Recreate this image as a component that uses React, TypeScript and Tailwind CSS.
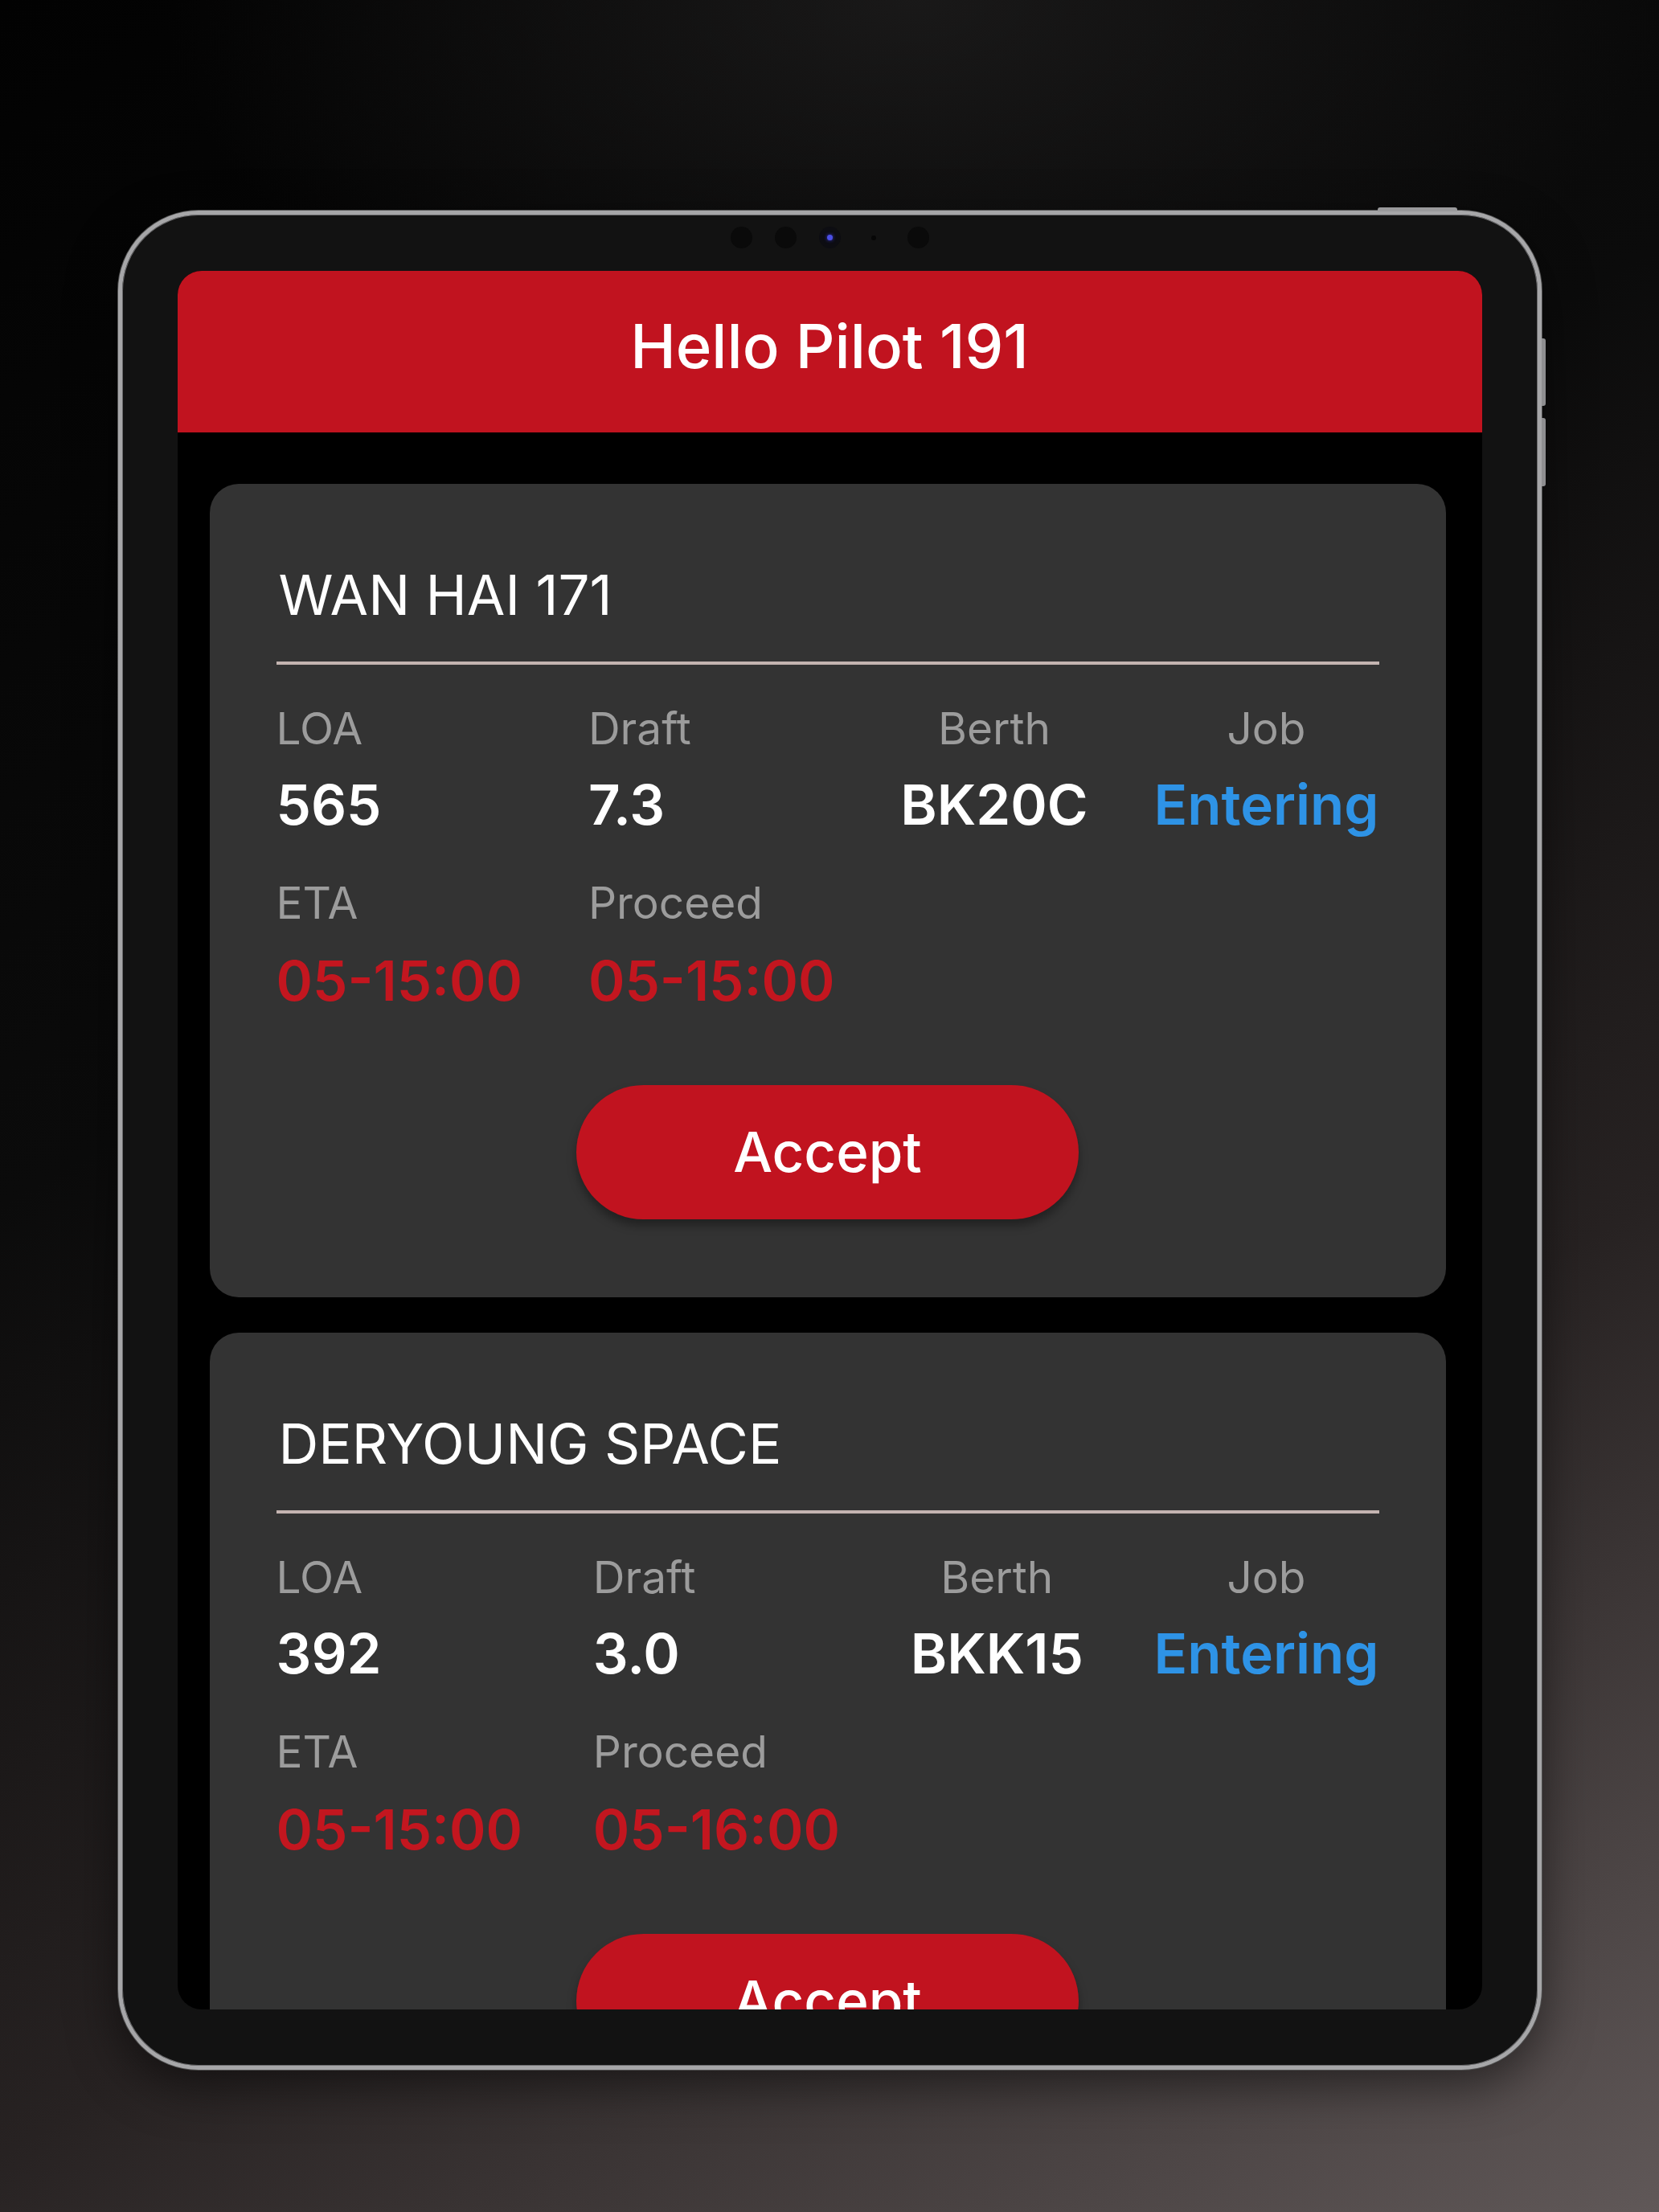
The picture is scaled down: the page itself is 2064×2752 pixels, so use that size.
import React from "react";

type Job = {
  name: string;
  loa: string;
  draft: string;
  berth: string;
  job: string;
  eta: string;
  proceed: string;
};

const jobs: Job[] = [
  { name: "WAN HAI 171", loa: "565", draft: "7.3", berth: "BK20C", job: "Entering", eta: "05-15:00", proceed: "05-15:00" },
  { name: "DERYOUNG SPACE", loa: "392", draft: "3.0", berth: "BKK15", job: "Entering", eta: "05-15:00", proceed: "05-16:00" },
];

function Label({ children, className = "" }: { children: React.ReactNode; className?: string }) {
  return <div className={`text-[55px] leading-[55px] text-[#9c9c9c] ${className}`}>{children}</div>;
}

function Value({ children, className = "" }: { children: React.ReactNode; className?: string }) {
  return <div className={`mt-[33px] text-[69px] leading-[69px] font-semibold ${className}`}>{children}</div>;
}

function JobCard({ j }: { j: Job }) {
  return (
    <div className="shrink-0 rounded-[36px] bg-[#333333] pt-[104px] pb-[97px] px-[83px] flex flex-col">
      <div className="pl-[3px] text-[69px] leading-[69px] text-white">{j.name}</div>
      <div className="mt-[48px] h-[4px] bg-[#c4b4b1]" />
      <div className="mt-[52px] flex justify-between">
        <div className="flex flex-col items-start">
          <Label>LOA</Label>
          <Value className="text-white">{j.loa}</Value>
          <Label className="mt-[60px]">ETA</Label>
          <Value className="text-[#c3161f] mt-[35px]">{j.eta}</Value>
        </div>
        <div className="flex flex-col items-start">
          <Label>Draft</Label>
          <Value className="text-white">{j.draft}</Value>
          <Label className="mt-[60px]">Proceed</Label>
          <Value className="text-[#c3161f] mt-[35px]">{j.proceed}</Value>
        </div>
        <div className="flex flex-col items-center">
          <Label>Berth</Label>
          <Value className="text-white">{j.berth}</Value>
        </div>
        <div className="flex flex-col items-center">
          <Label>Job</Label>
          <Value className="text-[#2e93e6]">{j.job}</Value>
        </div>
      </div>
      <button className="mt-[95px] self-center w-[625px] h-[167px] rounded-full bg-[#c1131f] text-white text-[69px] leading-[69px] font-medium flex items-center justify-center shadow-[0_8px_12px_rgba(0,0,0,0.35)]">
        Accept
      </button>
    </div>
  );
}

export default function App() {
  return (
    <div className="w-full min-h-[2752px] h-[2752px] overflow-hidden flex justify-center pt-[262px] font-['Inter','Noto_Sans',sans-serif] bg-[radial-gradient(ellipse_60%_25%_at_55%_0%,rgba(32,31,31,0.75),transparent_75%),linear-gradient(150deg,#020202_0%,#0b0b0b_38%,#272222_68%,#605858_100%)]">
      <div className="relative w-[1771px] h-[2313px] rounded-[100px] border-[5px] border-[#a6a6a8] bg-[#121212] px-[69px] pb-[70px] flex flex-col shadow-[0_0_0_1px_#505050,inset_0_0_0_1px_#6a6a6c,0_20px_60px_rgba(0,0,0,0.5)]">
        {/* hardware buttons */}
        <div className="absolute top-[-9px] left-[1562px] w-[99px] h-[5px] rounded-t-[3px] bg-[#9a9a9c]" />
        <div className="absolute top-[154px] right-[-10px] w-[5px] h-[84px] rounded-r-[3px] bg-[#8e8e90]" />
        <div className="absolute top-[253px] right-[-10px] w-[5px] h-[85px] rounded-r-[3px] bg-[#8e8e90]" />

        {/* top bezel with camera */}
        <div className="h-[70px] shrink-0 flex justify-center items-start pt-[15px] gap-[28px]">
          <div className="w-[27px] h-[27px] rounded-full bg-[#0a0a0a]" />
          <div className="w-[27px] h-[27px] rounded-full bg-[#0a0a0a]" />
          <div className="w-[27px] h-[27px] rounded-full bg-[#0d0d12] flex items-center justify-center">
            <div className="w-[7px] h-[7px] rounded-full bg-[#4b4fe6] shadow-[0_0_4px_#3a3ad0]" />
          </div>
          <div className="w-[27px] h-[27px] flex items-center justify-center">
            <div className="w-[6px] h-[6px] rounded-full bg-[#070707]" />
          </div>
          <div className="w-[27px] h-[27px] rounded-full bg-[#0a0a0a]" />
        </div>

        {/* screen */}
        <div className="flex-1 min-h-0 rounded-[30px] overflow-hidden bg-black flex flex-col">
          <div className="h-[201px] shrink-0 bg-[#c1131f] flex justify-center pt-[55px] text-white text-[76px] leading-[76px] font-medium shadow-[0_2px_4px_rgba(0,0,0,0.5)]">
            Hello Pilot 191
          </div>
          <div className="flex-1 min-h-0 overflow-hidden flex flex-col gap-[44px] pt-[64px] pl-[40px] pr-[45px]">
            {jobs.map((j) => (
              <JobCard key={j.name} j={j} />
            ))}
          </div>
        </div>
      </div>
    </div>
  );
}
